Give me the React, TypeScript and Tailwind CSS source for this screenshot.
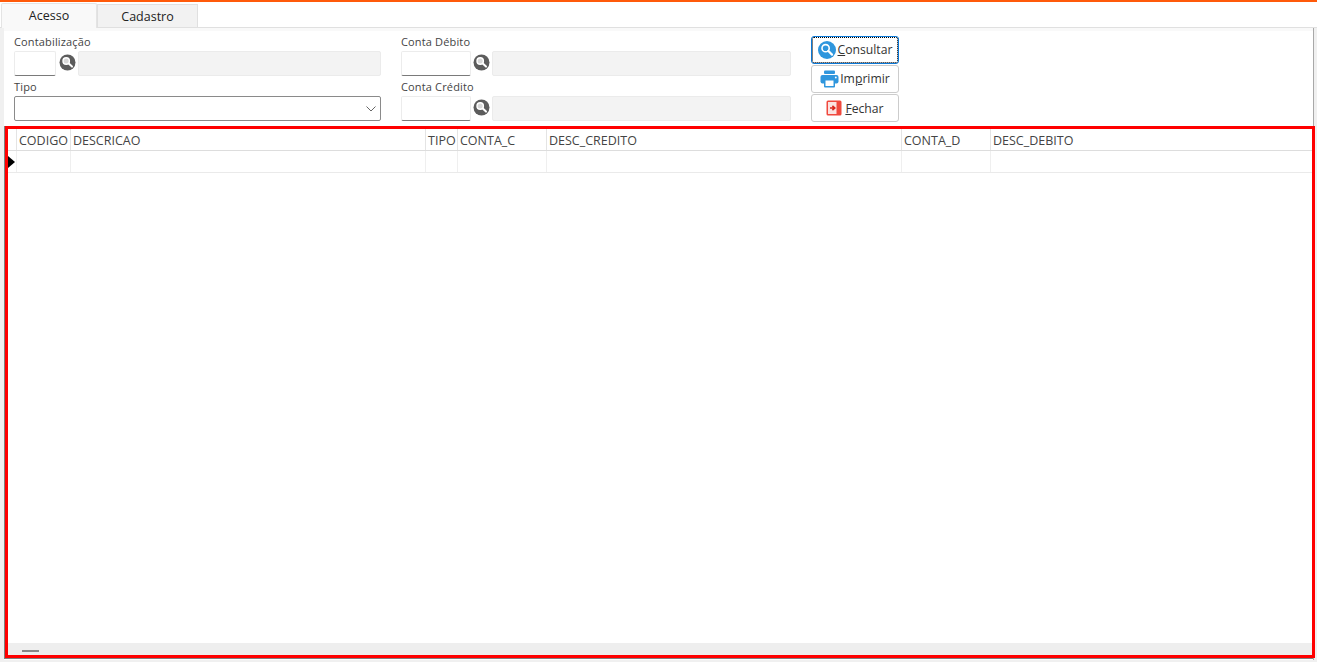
const font = "font-['Open_Sans','Noto_Sans',sans-serif]"

const columns = [
  { label: "", width: "w-[9px]" },
  { label: "CODIGO", width: "w-[54px]" },
  { label: "DESCRICAO", width: "w-[355px]" },
  { label: "TIPO", width: "w-[32px]" },
  { label: "CONTA_C", width: "w-[89px]" },
  { label: "DESC_CREDITO", width: "w-[355px]" },
  { label: "CONTA_D", width: "w-[89px]" },
  { label: "DESC_DEBITO", width: "flex-1" },
]

function LookupIcon() {
  return (
    <svg width="17" height="17" viewBox="0 0 17 17" className="shrink-0">
      <circle cx="8.5" cy="8.5" r="8" fill="#5c5c5c" />
      <circle cx="7.2" cy="7" r="3.2" fill="#d8d8d8" stroke="#ffffff" strokeWidth="1.4" />
      <path d="M9.8 9.6 13 12.6" stroke="#ffffff" strokeWidth="2" strokeLinecap="round" />
    </svg>
  )
}

function SearchBlueIcon() {
  return (
    <svg width="18" height="18" viewBox="0 0 18 18" className="shrink-0">
      <circle cx="9" cy="9" r="9" fill="#2f96dd" />
      <circle cx="7.6" cy="7.2" r="3.6" fill="#2f96dd" stroke="#ffffff" strokeWidth="1.6" />
      <path d="M10.4 10 14 13.6" stroke="#ffffff" strokeWidth="2.2" strokeLinecap="round" />
    </svg>
  )
}

function PrinterIcon() {
  return (
    <svg width="19" height="18" viewBox="0 0 19 18" className="shrink-0">
      <rect x="4" y="0.5" width="11" height="3.5" rx="1" fill="#2f96dd" />
      <rect x="0.5" y="5" width="18" height="8.5" rx="2" fill="#2f96dd" />
      <rect x="4" y="10" width="11" height="7.5" rx="1" fill="#2f96dd" />
      <rect x="5.5" y="10.5" width="8" height="5.5" fill="#ffffff" />
      <circle cx="15.8" cy="7.5" r="0.9" fill="#ffffff" />
    </svg>
  )
}

function ExitIcon() {
  return (
    <svg width="16" height="16" viewBox="0 0 16 16" className="shrink-0">
      <rect x="0.5" y="0.5" width="15" height="15" rx="1.5" fill="#f0493e" />
      <rect x="2" y="2" width="8.5" height="12" fill="#fbe3e1" />
      <path d="M4 8h4M6.4 5.8 8.8 8l-2.4 2.2" stroke="#d8261c" strokeWidth="1.6" fill="none" />
    </svg>
  )
}

function Lookup({ label, code, icon, name }: { label: string; code: string; icon: string; name: string }) {
  return (
    <div className="flex flex-col">
      <span className="h-[15px] text-[11px] leading-[13px] text-[#444444] tracking-[0.15px]">{label}</span>
      <div className="mt-px flex h-[25px] items-stretch">
        <div className={`${code} rounded-[2px] border border-[#ececec] border-b-[#7a7a7a] bg-white`} />
        <div className={`${icon} flex items-start justify-center pt-[3px]`}>
          <LookupIcon />
        </div>
        <div className={`${name} rounded-[2px] border border-[#ebebeb] bg-[#f3f3f3]`} />
      </div>
    </div>
  )
}

function ActionButton({ children, focused }: { children: React.ReactNode; focused?: boolean }) {
  return (
    <button
      className={`flex h-[28px] w-[88px] items-center justify-center rounded-[3px] border bg-white text-[12.2px] text-[#333333] ${
        focused ? "border-[#0a78d7] outline-1 -outline-offset-2 outline-dotted outline-black" : "border-[#cccccc]"
      }`}
    >
      {children}
    </button>
  )
}

export default function App() {
  return (
    <div className={`${font} flex h-[662px] w-[1317px] flex-col overflow-hidden bg-white`}>
      <div className="h-[2px] bg-[#ff5a0a]" />

      {/* Tabs */}
      <div className="flex h-[26px] items-end border-b border-[#e0e0e0] pl-px">
        <div className="-mb-px flex h-[25px] w-[96px] items-center justify-center rounded-t-[2px] border border-b-0 border-[#e4e4e4] bg-[#f9f9f9] text-[12.5px] text-[#222222]">
          Acesso
        </div>
        <div className="flex h-[23px] w-[101px] items-center justify-center border border-b-0 border-[#e0e0e0] bg-[#f2f2f2] pt-[3px] text-[12.5px] text-[#222222]">
          Cadastro
        </div>
      </div>

      {/* Form */}
      <div className="flex min-h-0 flex-1 flex-col bg-[#f0f0f0] pb-[2px] pl-[4px] pr-[3px]">
        <div className="flex min-h-0 flex-1 flex-col border-r border-[#a8a8a8] bg-white">
          <div className="h-[3px] bg-[#f9f9f9]" />
          <div className="flex h-[95px] pl-[10px] pt-[4px]">
            <div className="flex w-[387px] flex-col gap-[4px]">
              <Lookup label="Contabilização" code="w-[42px]" icon="w-[22px]" name="w-[303px]" />
              <div className="flex flex-col">
                <span className="h-[15px] text-[11px] leading-[13px] text-[#444444] tracking-[0.15px]">Tipo</span>
                <div className="mt-px flex h-[25px] w-[367px] items-center justify-end rounded-[2px] border border-[#8a8a8a] bg-white pr-[4px]">
                  <svg width="10" height="6" viewBox="0 0 10 6">
                    <path d="M0.5 0.5 5 5l4.5-4.5" fill="none" stroke="#666666" />
                  </svg>
                </div>
              </div>
            </div>
            <div className="flex w-[410px] flex-col gap-[4px]">
              <Lookup label="Conta Débito" code="w-[70px]" icon="w-[21px]" name="w-[299px]" />
              <Lookup label="Conta Crédito" code="w-[70px]" icon="w-[21px]" name="w-[299px]" />
            </div>
            <div className="mt-px flex flex-col gap-px">
              <ActionButton focused>
                <SearchBlueIcon />
                <span className="ml-[2px]"><span className="underline">C</span>onsultar</span>
              </ActionButton>
              <ActionButton>
                <PrinterIcon />
                <span className="ml-px">Im<span className="underline">p</span>rimir</span>
              </ActionButton>
              <ActionButton>
                <ExitIcon />
                <span className="ml-[3px] pt-[2px]"><span className="underline">F</span>echar</span>
              </ActionButton>
            </div>
          </div>

          {/* Grid, with the screenshot's red annotation as its frame */}
          <div className="mb-px flex min-h-0 flex-1 flex-col border-b border-l border-[#808080]">
            <div className="mr-[-2px] flex min-h-0 flex-1 flex-col border-[3px] border-[#ff0000] bg-white">
              <div className="flex h-[22px] border-b border-[#dddddd]">
                {columns.map((c, i) => (
                  <div
                    key={i}
                    className={`${c.width} overflow-hidden whitespace-nowrap border-r border-[#e4e4e4] pl-[2px] text-[12.5px] leading-[23px] text-[#444444] last:border-r-0`}
                  >
                    {c.label}
                  </div>
                ))}
              </div>
              <div className="flex h-[22px] border-b border-[#eaeaea]">
                {columns.map((c, i) => (
                  <div key={i} className={`${c.width} flex items-center border-r border-[#efefef] last:border-r-0`}>
                    {i === 0 && (
                      <svg width="7" height="12" viewBox="0 0 7 12">
                        <path d="M0 0 7 6 0 12Z" fill="#000000" />
                      </svg>
                    )}
                  </div>
                ))}
              </div>
              <div className="flex-1" />
              <div className="flex h-[12px] items-end bg-[#eeeeee] pb-[3px] pl-[14px]">
                <div className="h-[2px] w-[17px] bg-[#888888]" />
              </div>
            </div>
          </div>
        </div>
      </div>
    </div>
  )
}
